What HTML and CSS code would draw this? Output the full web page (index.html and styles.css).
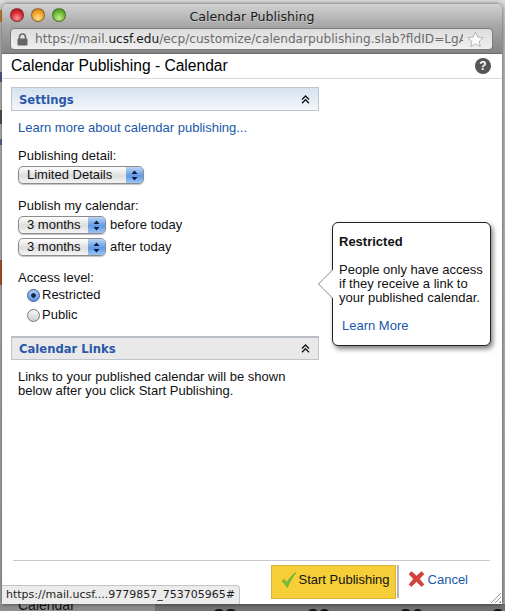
FILE: index.html
```html
<!DOCTYPE html>
<html lang="en">
<head>
<meta charset="utf-8">
<title>Calendar Publishing</title>
<link rel="stylesheet" href="styles.css">
</head>
<body>
<div class="desktop">
  <div class="behind-strip orange-a"></div>
  <div class="behind-strip blue-a"></div>
  <div class="behind-strip dark-a"></div>
  <div class="behind-strip blue-b"></div>
  <div class="behind-strip orange-b"></div>
  <div class="behind-bottom">
    <span class="behind-cal">Calendar</span>
    <span class="behind-num n1">28</span>
    <span class="behind-num n2">29</span>
    <span class="behind-num n3">30</span>
    <span class="behind-num n4">3</span>
  </div>
  <div class="window">
    <div class="chrome">
      <div class="titlebar">
        <div class="lights">
          <span class="light red"></span>
          <span class="light amber"></span>
          <span class="light green"></span>
        </div>
        <div class="win-title">Calendar Publishing</div>
      </div>
      <div class="urlbar">
        <svg class="lock" width="11" height="13" viewBox="0 0 11 13"><path d="M2.500 6V4a3 3 0 0 1 6 0v2" fill="none" stroke="#666" stroke-width="1.600"/><rect x="0.500" y="5.500" width="10" height="7" rx="1" fill="#666"/></svg>
        <div class="url"><span class="url-dim">https://mail.</span><span class="url-host">ucsf.edu</span><span class="url-dim">/ecp/customize/calendarpublishing.slab?fldID=LgAAAA</span></div>
        <svg class="star" width="17" height="17" viewBox="0 0 17 17"><path d="M8.500 1l2.300 5 5.400.6-4 3.700 1.100 5.400-4.800-2.700-4.800 2.700 1.100-5.400-4-3.700 5.400-.6z" fill="#fbfbfb" stroke="#b4b4b4"/></svg>
      </div>
    </div>
    <div class="page">
      <header class="page-head">
        <h1 class="page-title">Calendar Publishing - Calendar</h1>
        <span class="help">?</span>
      </header>
      <div class="main">
        <section class="col">
          <div class="sec-head active"><span class="sec-title">Settings</span>
            <svg class="chev" width="9" height="9" viewBox="0 0 9 9"><path d="M1 4.500l3.500-3.500 3.500 3.500M1 8.200l3.500-3.500 3.500 3.500" fill="none" stroke="#111" stroke-width="1.300"/></svg>
          </div>
          <div class="sec-body">
            <a class="link learn" href="#">Learn more about calendar publishing...</a>
            <div class="label detail-label">Publishing detail:</div>
            <div class="select wide"><span class="sel-text">Limited Details</span><span class="sel-arrow"><svg width="7" height="11" viewBox="0 0 7 11"><path d="M3.500 0.500l3 3.500h-6zM3.500 10.500l3-3.500h-6z" fill="#0c1c38"/></svg></span></div>
            <div class="label cal-label">Publish my calendar:</div>
            <div class="sel-row"><div class="select narrow"><span class="sel-text">3 months</span><span class="sel-arrow"><svg width="7" height="11" viewBox="0 0 7 11"><path d="M3.500 0.500l3 3.500h-6zM3.500 10.500l3-3.500h-6z" fill="#0c1c38"/></svg></span></div><span class="label">before today</span></div>
            <div class="sel-row second"><div class="select narrow"><span class="sel-text">3 months</span><span class="sel-arrow"><svg width="7" height="11" viewBox="0 0 7 11"><path d="M3.500 0.500l3 3.500h-6zM3.500 10.500l3-3.500h-6z" fill="#0c1c38"/></svg></span></div><span class="label">after today</span></div>
            <div class="label access-label">Access level:</div>
            <div class="radio-row"><span class="radio on"></span><span class="label">Restricted</span></div>
            <div class="radio-row"><span class="radio"></span><span class="label">Public</span></div>
          </div>
          <div class="sec-head second-head"><span class="sec-title">Calendar Links</span>
            <svg class="chev" width="9" height="9" viewBox="0 0 9 9"><path d="M1 4.500l3.500-3.500 3.500 3.500M1 8.200l3.500-3.500 3.500 3.500" fill="none" stroke="#111" stroke-width="1.300"/></svg>
          </div>
          <p class="links-text">Links to your published calendar will be shown below after you click Start Publishing.</p>
        </section>
      </div>
      <footer class="footer">
        <button class="start" type="button">
          <svg width="16" height="16" viewBox="0 0 16 16"><path d="M1 9l2.500-1.500 2.300 3.200C8 6.500 11 3 15 .5 11.500 5 8.500 10 6.300 15.500 4.800 13 3 10.800 1 9z" fill="#74c23c" stroke="#4f9a2a" stroke-width=".5"/></svg>
          <span>Start Publishing</span>
        </button>
        <span class="btn-sep"></span>
        <a class="cancel" href="#">
          <svg width="17" height="16" viewBox="0 0 17 16"><path d="M1 3l2.500-2.500 5 4.500 5-4.500L16 3l-4.500 5 4.500 5.500-2.500 2-5-5-5 5L1 13.500 5.500 8z" fill="#d8413a" stroke="#b8302c" stroke-width=".5"/></svg>
          <span>Cancel</span>
        </a>
      </footer>
      <div class="grip"></div>
    </div>
    <aside class="tip">
      <span class="tip-arrow"></span>
      <div class="tip-title">Restricted</div>
      <p class="tip-text">People only have access if they receive a link to your published calendar.</p>
      <a class="link tip-link" href="#">Learn More</a>
    </aside>
    <div class="status">https://mail.ucsf....9779857_753705965#</div>
  </div>
</div>
</body>
</html>
```
FILE: styles.css
```css
* { box-sizing: border-box; }
html, body { margin: 0; height: 100%; }
body { overflow: hidden; background: #7f7f7f; font-family: "Liberation Sans", Arial, sans-serif; color: #111; }
.desktop { position: relative; width: 505px; height: 611px; overflow: hidden; background: linear-gradient(#dcdcdc 0, #bdbdbd 30px, #a8a8a8 600px); }
.behind-strip { position: absolute; left: 0; width: 2px; }
.orange-a { top: 10px; height: 12px; background: #c8882e; }
.blue-a { top: 72px; height: 10px; background: #5a5f96; }
.dark-a { top: 110px; height: 14px; background: #555; }
.blue-b { top: 139px; height: 6px; background: #5a6aa0; }
.orange-b { top: 260px; height: 25px; background: #b5562a; }
.behind-bottom { position: absolute; left: 0; right: 0; top: 604px; height: 7px; background: linear-gradient(90deg, #8e8e8e 0 155px, #707070 155px); overflow: hidden; font-size: 14px; }
.behind-cal { position: absolute; left: 18px; top: -7px; color: #111; }
.behind-num { position: absolute; top: 0; font: bold 21px/24px "Liberation Sans", sans-serif; color: #111; }
.n1 { left: 213px; } .n2 { left: 307px; } .n3 { left: 400px; } .n4 { left: 492px; }

.window { position: absolute; left: 2px; top: 4px; width: 500px; height: 600px; border-radius: 5px 5px 0 0; box-shadow: 0 0 4px rgba(0,0,0,.6); display: flex; flex-direction: column; overflow: hidden; }
.chrome { height: 50px; flex: none; background: linear-gradient(#d2d2d2, #a6a6a6 45%, #858585); border-bottom: 1px solid #6c6c6c; padding: 0 8px; }
.titlebar { height: 24px; position: relative; display: flex; align-items: center; justify-content: center; }
.lights { position: absolute; left: 0; top: 4px; display: flex; gap: 7px; }
.light { width: 14px; height: 14px; border-radius: 50%; border: 1px solid rgba(60,60,60,.55); }
.red { background: radial-gradient(circle at 50% 75%, #f89a9a, #d8232c 55%, #a51218); }
.amber { background: radial-gradient(circle at 50% 75%, #fde38c, #ee9a22 60%, #c56f10); }
.green { background: radial-gradient(circle at 50% 75%, #c4ef8c, #62b32e 60%, #3f8a18); }
.win-title { font: 12.6px "DejaVu Sans", sans-serif; color: #1a1a1a; text-shadow: 0 1px 0 rgba(255,255,255,.35); }
.urlbar { height: 22px; width: 483px; background: linear-gradient(#dcdcdc, #f0f0f0); border: 1px solid #7b7b7b; border-radius: 4px; display: flex; align-items: center; padding: 0 5px 0 6px; }
.lock { flex: none; margin-right: 7px; }
.url { width: 428px; flex: none; white-space: nowrap; overflow: hidden; font: 12.15px "DejaVu Sans", sans-serif; }
.url-dim { color: #6b6b6b; }
.url-host { color: #1a1a1a; }
.star { flex: none; margin-left: 4px; }

.page { position: relative; flex: 1; background: #fff; display: flex; flex-direction: column; }
.page-head { height: 25px; flex: none; border-bottom: 1px solid #d8d8d8; padding: 0 9px; display: flex; align-items: center; justify-content: space-between; }
.page-title { margin: 0; font-size: 15.6px; font-weight: 400; color: #000; }
.help { width: 16px; height: 16px; border-radius: 50%; background: #555; color: #fff; font: bold 12px/16px "Liberation Sans", sans-serif; text-align: center; margin-right: 2px; }
.main { flex: 1; padding: 8px 9px 0; }
.col { width: 308px; }
.sec-head { height: 24px; border: 1px solid #c0c4cb; background: #e9e9ea; display: flex; align-items: center; justify-content: space-between; padding: 0 8px 0 7px; }
.sec-head.active { background: linear-gradient(#d5e2ef, #f4f7fa); padding-top: 1px; }
.second-head { border-top: 2px solid #b9bdc6; }
.sec-title { font: bold 11.6px "DejaVu Sans", sans-serif; color: #2a58a8; }
.sec-body { padding: 10px 7px 13px; font-size: 13px; }
.link { color: #2058a8; text-decoration: none; font-size: 13px; }
.label { font-size: 13px; line-height: 14px; color: #111; }
.learn { display: block; line-height: 14px; }
.detail-label { margin-top: 14px; }
.select { flex: none; height: 18px; border: 1px solid #8c8c8c; border-radius: 5px; background: linear-gradient(#fefefe, #dedede 55%, #f4f4f4); display: flex; align-items: stretch; justify-content: space-between; overflow: hidden; font-size: 13px; box-shadow: 0 1px 1px rgba(0,0,0,.25); }
.wide { width: 126px; margin-top: 3px; }
.narrow { width: 88px; }
.sel-text { padding-left: 8px; line-height: 16px; color: #111; }
.sel-arrow { width: 17px; background: linear-gradient(#bdd5f4, #5f9ae6 55%, #9cc4f4); display: flex; align-items: center; justify-content: center; }
.cal-label { margin-top: 15px; }
.sel-row { display: flex; align-items: center; gap: 4px; margin-top: 3px; }
.sel-row.second { margin-top: 4px; }
.access-label { margin-top: 15px; }
.radio-row { display: flex; align-items: center; gap: 2px; padding-left: 9px; margin-top: 2px; height: 16px; }
.radio-row + .radio-row { margin-top: 4px; }
.radio { width: 13px; height: 13px; border-radius: 50%; border: 1px solid #777; background: linear-gradient(#f8f8f8, #cfcfcf); }
.radio.on { border-color: #3a5f96; background: radial-gradient(circle, #1a2a44 0 2px, transparent 2.5px), linear-gradient(#a8c8f2, #5c96e4); }
.links-text { margin: 10px 0 0; padding: 0 7px; font-size: 13px; line-height: 14px; }

.footer { flex: none; height: 44px; margin: 0 12px 0 11px; border-top: 1px solid #c8c8c8; display: flex; align-items: flex-start; justify-content: flex-end; padding: 4px 22px 0 0; }
.start { width: 125px; height: 34px; padding: 0 0 5px 9px; border: 1px solid #dcb23a; background: #f6cf38; display: flex; align-items: center; gap: 2px; font: 13px "Liberation Sans", sans-serif; color: #111; white-space: nowrap; }
.btn-sep { width: 2px; height: 33px; background: #b8b8b8; margin-left: 1px; }
.cancel { margin-left: 9px; height: 28px; display: flex; align-items: center; gap: 3px; color: #2058a8; font-size: 13px; text-decoration: none; }
.grip { position: absolute; right: 1px; bottom: 1px; width: 11px; height: 11px; background: repeating-linear-gradient(135deg, transparent 0 2px, #999 2px 3px); clip-path: polygon(100% 0, 100% 100%, 0 100%); }

.tip { position: absolute; left: 330px; top: 218px; width: 159px; height: 124px; background: #fff; border: 1px solid #222; border-radius: 6px; box-shadow: 2px 3px 5px rgba(0,0,0,.5); padding: 12px 6px 0 6px; font-size: 13px; }
.tip-arrow { position: absolute; left: -11px; top: 51px; width: 20px; height: 20px; background: #fff; border-left: 1px solid #aaa; border-bottom: 1px solid #aaa; transform: rotate(45deg); }
.tip-title { font-weight: 700; line-height: 14px; position: relative; }
.tip-text { position: relative; margin: 14px 0 0; line-height: 14px; }
.tip-link { position: relative; display: block; margin: 14px 0 0 3px; line-height: 14px; }
.status { position: absolute; left: 0; bottom: 0; width: 238px; height: 19px; background: #ececec; border: 1px solid #c4c4c4; border-left: 0; border-bottom: 0; border-radius: 0 4px 0 0; font: 11px/17px "DejaVu Sans", sans-serif; padding-left: 4px; color: #222; white-space: nowrap; }
```
